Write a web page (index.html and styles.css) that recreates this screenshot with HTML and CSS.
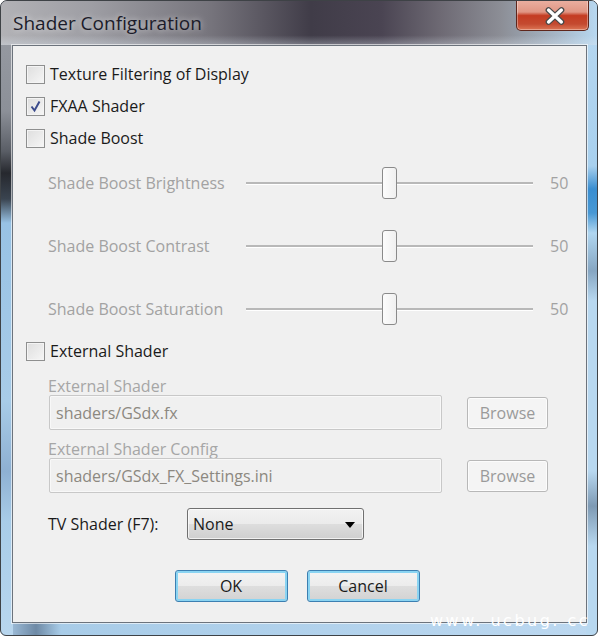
FILE: index.html
```html
<!DOCTYPE html>
<html lang="en">
<head>
    <meta charset="UTF-8">
    <meta name="viewport" content="width=device-width, initial-scale=1.0">
    <title>Shader Configuration</title>
    <link rel="stylesheet" href="styles.css">
</head>
<body>
    <div class="window">
        <div class="titlebar">
            <span class="title">Shader Configuration</span>
            <button class="close-button" title="Close">
                <svg width="72" height="29" viewBox="0 0 72 29">
                    <path d="M32 9 L45 21 M45 9 L32 21" stroke="#4a4a4a" stroke-width="6" stroke-linecap="round"/>
                    <path d="M32 9 L45 21 M45 9 L32 21" stroke="#ffffff" stroke-width="3.4" stroke-linecap="round"/>
                </svg>
            </button>
        </div>

        <div class="client">
            <label class="check-row"><span class="checkbox"></span>Texture Filtering of Display</label>
            <label class="check-row">
                <span class="checkbox">
                    <svg width="17" height="17" viewBox="0 0 17 17">
                        <path d="M4.5 8.5 L7.5 12.5 L12.5 3.5" fill="none" stroke="#3b4b8c" stroke-width="2"/>
                    </svg>
                </span>FXAA Shader
            </label>
            <label class="check-row"><span class="checkbox"></span>Shade Boost</label>

            <div class="slider-group">
                <div class="slider-row">
                    <span class="slider-label">Shade Boost Brightness</span>
                    <div class="slider"><div class="slider-track"></div><div class="slider-thumb"></div></div>
                    <span class="slider-value">50</span>
                </div>
                <div class="slider-row">
                    <span class="slider-label">Shade Boost Contrast</span>
                    <div class="slider"><div class="slider-track"></div><div class="slider-thumb"></div></div>
                    <span class="slider-value">50</span>
                </div>
                <div class="slider-row">
                    <span class="slider-label">Shade Boost Saturation</span>
                    <div class="slider"><div class="slider-track"></div><div class="slider-thumb"></div></div>
                    <span class="slider-value">50</span>
                </div>
            </div>

            <label class="check-row external"><span class="checkbox"></span>External Shader</label>

            <div class="file-group">
                <div class="field-label">External Shader</div>
                <div class="file-row">
                    <div class="text-field">shaders/GSdx.fx</div>
                    <button class="browse-button">Browse</button>
                </div>
            </div>
            <div class="file-group second">
                <div class="field-label">External Shader Config</div>
                <div class="file-row">
                    <div class="text-field">shaders/GSdx_FX_Settings.ini</div>
                    <button class="browse-button">Browse</button>
                </div>
            </div>

            <div class="tv-row">
                <span class="tv-label">TV Shader (F7):</span>
                <div class="combo">None<span class="combo-arrow"></span></div>
            </div>

            <div class="dialog-buttons">
                <button class="dialog-button">OK</button>
                <button class="dialog-button">Cancel</button>
            </div>
        </div>
    </div>
    <div class="watermark">www. ucbug. cc</div>
</body>
</html>
```

FILE: styles.css
```css
body {
    margin: 0;
    background: #ffffff;
    font-family: "Open Sans", "Noto Sans", sans-serif;
    font-size: 16px;
    color: #1a1a1a;
}
.window {
    position: relative;
    width: 596px;
    height: 634px;
    display: flex;
    flex-direction: column;
    border: 1px solid #3e4246;
    border-radius: 7px 7px 6px 6px;
    background-color: #b9d6ef;
    background-image:
        linear-gradient(to bottom, #9a9ea6 0, #8c9098 110px, #5a5e66 150px, #26282e 172px, #3a4450 198px, #98c2e4 222px, #a8cce8 400px, #8eb0d2 470px, #a8cce8 520px, #b8d6ee 100%),
        linear-gradient(to bottom, #b8d8f0 0, #a8d0ee 165px, #3a8ed0 188px, #4898d4 212px, #b0d6f0 232px, #86a6c2 270px, #b8d8f0 300px, #b8d8f0 470px, #7e9ab4 505px, #b8d8f0 545px, #b8d8f0 100%),
        linear-gradient(to right, #b0d0ec 0, #6e8aa6 35px, #a8cce8 60px, #bcd8f0 100%);
    background-size: 12px 100%, 11px 100%, 100% 13px;
    background-position: left top, right top, left bottom;
    background-repeat: no-repeat;
    overflow: hidden;
}
.titlebar {
    height: 44px;
    display: flex;
    align-items: flex-start;
    background:
        linear-gradient(to bottom, rgba(255,255,255,0) 78%, rgba(220,230,240,0.35) 100%),
        linear-gradient(to right, #b2b2b6 0, #9e9ea4 90px, #76747c 210px, #403c48 310px, #4a4452 380px, #6e6a74 440px, #8c8e96 500px, #a6b6c6 555px, #b8d8f0 100%);
}
.title {
    margin: 9px 0 0 12px;
    font-size: 19px;
    color: #1c1c2a;
    text-shadow: 0 0 6px rgba(255,255,255,0.7);
}
.close-button {
    margin: -1px 8px 0 auto;
    width: 73px;
    height: 31px;
    padding: 0;
    border: 1px solid #5e261c;
    border-top: none;
    border-radius: 0 0 5px 5px;
    background: linear-gradient(to bottom, #eab0a2 0%, #e09684 40%, #c43c22 52%, #c44a30 80%, #dc7656 100%);
    box-shadow: inset 0 0 0 1px rgba(255,255,255,0.35);
    display: flex;
    align-items: center;
    justify-content: center;
}
.client {
    flex: 1;
    margin: 0 10px 12px 11px;
    border: 1px solid #6c737c;
    box-shadow: 0 0 0 1px rgba(255,255,255,0.6);
    background: #f0f0f0;
    padding: 12px 13px 0 13px;
    display: flex;
    flex-direction: column;
}
.check-row {
    height: 32px;
    display: flex;
    align-items: center;
    gap: 5px;
    cursor: default;
}
.checkbox {
    width: 17px;
    height: 17px;
    border: 1px solid #8e8f8f;
    background: linear-gradient(135deg, #dedede 0%, #f6f6f6 100%);
    box-shadow: inset 0 0 0 1px #f4f4f4;
    display: flex;
    align-items: center;
    justify-content: center;
}
.slider-group {
    margin-top: 9px;
    padding-left: 22px;
    display: flex;
    flex-direction: column;
    gap: 23px;
}
.slider-row {
    height: 40px;
    display: flex;
    align-items: center;
    color: #a2a2a2;
}
.slider-label {
    width: 198px;
}
.slider {
    position: relative;
    width: 287px;
    height: 40px;
    display: flex;
    align-items: center;
}
.slider-track {
    width: 100%;
    height: 0;
    border-top: 2px solid #b8b8b8;
    border-bottom: 1px solid #ffffff;
}
.slider-thumb {
    position: absolute;
    left: 136px;
    top: 4px;
    width: 13px;
    height: 30px;
    border: 1px solid #8a8a8a;
    border-radius: 3px;
    background: linear-gradient(to right, #fcfcfc, #f0f0f0);
}
.slider-value {
    margin-left: 17px;
}
.check-row.external {
    margin-top: 6px;
}
.file-group {
    margin-top: 11px;
    padding-left: 22px;
    color: #a6a6a6;
}
.file-group.second {
    margin-top: 11px;
}
.field-label {
    height: 16px;
    line-height: 16px;
}
.file-row {
    margin-top: 1px;
    display: flex;
    align-items: center;
    gap: 25px;
}
.text-field {
    width: 385px;
    height: 33px;
    margin-left: 1px;
    padding-left: 6px;
    border: 1px solid #c8c8c8;
    border-radius: 2px;
    box-shadow: inset 0 0 0 1px #f8f8f8;
    display: flex;
    align-items: center;
    color: #8c8880;
}
.browse-button {
    width: 81px;
    height: 32px;
    border: 1px solid #b8b8b8;
    border-radius: 3px;
    background: #f4f4f4;
    box-shadow: inset 0 0 0 1px #fcfcfc;
    font-family: inherit;
    font-size: 16px;
    color: #9a9a9a;
    padding: 0;
}
.tv-row {
    margin-top: 15px;
    padding-left: 22px;
    display: flex;
    align-items: center;
}
.tv-label {
    width: 139px;
}
.combo {
    position: relative;
    width: 170px;
    height: 30px;
    padding-left: 5px;
    border: 1px solid #707070;
    border-radius: 3px;
    background: linear-gradient(to bottom, #f2f2f2 0%, #ebebeb 50%, #dddddd 51%, #cfcfcf 100%);
    box-shadow: inset 0 0 0 1px rgba(255,255,255,0.7);
    display: flex;
    align-items: center;
}
.combo-arrow {
    position: absolute;
    right: 8px;
    top: 13px;
    border-left: 5px solid transparent;
    border-right: 5px solid transparent;
    border-top: 6px solid #000000;
}
.dialog-buttons {
    margin-top: 30px;
    padding-right: 5px;
    display: flex;
    justify-content: center;
    gap: 19px;
}
.dialog-button {
    width: 113px;
    height: 32px;
    padding: 0;
    border: 1px solid #3c7fb1;
    border-radius: 3px;
    background: linear-gradient(to bottom, #f4f4f4 0%, #ececec 50%, #dedede 51%, #d2d2d2 100%);
    box-shadow: inset 0 0 0 2px #8ad4f2;
    font-family: inherit;
    font-size: 16px;
    color: #1a1a1a;
}
.watermark {
    position: absolute;
    left: 430px;
    top: 611px;
    font-family: "DejaVu Sans", sans-serif;
    font-size: 16px;
    letter-spacing: 2.5px;
    color: #ffffff;
    white-space: pre;
}
```
